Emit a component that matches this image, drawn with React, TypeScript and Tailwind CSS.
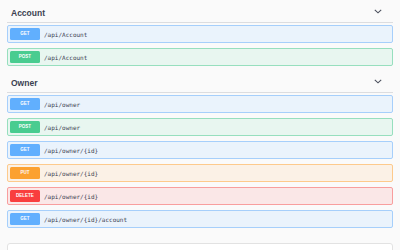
import { type FC } from "react";

type Method = "GET" | "POST" | "PUT" | "DELETE";

interface Op {
  method: Method;
  path: string;
}

const styles: Record<Method, { row: string; badge: string }> = {
  GET: { row: "bg-[#eaf3fc] border-[#a6cffb]", badge: "bg-[#61affe]" },
  POST: { row: "bg-[#e8f6f0] border-[#97dfbe]", badge: "bg-[#49cc90]" },
  PUT: { row: "bg-[#fbf1e6] border-[#fdca8c]", badge: "bg-[#fca130]" },
  DELETE: { row: "bg-[#fae7e7] border-[#f89e9e]", badge: "bg-[#f93e3e]" },
};

const sections: { name: string; ops: Op[] }[] = [
  {
    name: "Account",
    ops: [
      { method: "GET", path: "/api/Account" },
      { method: "POST", path: "/api/Account" },
    ],
  },
  {
    name: "Owner",
    ops: [
      { method: "GET", path: "/api/owner" },
      { method: "POST", path: "/api/owner" },
      { method: "GET", path: "/api/owner/{id}" },
      { method: "PUT", path: "/api/owner/{id}" },
      { method: "DELETE", path: "/api/owner/{id}" },
      { method: "GET", path: "/api/owner/{id}/account" },
    ],
  },
];

const Chevron: FC = () => (
  <svg width="8" height="5" viewBox="0 0 8 5" className="mb-[4px]">
    <path d="M0.8 0.8 L4 3.8 L7.2 0.8" fill="none" stroke="#4a4f5c" strokeWidth="1.1" />
  </svg>
);

const OpRow: FC<{ op: Op }> = ({ op }) => (
  <div className={`h-[18px] flex items-center gap-[4px] border rounded-[2px] px-[2px] ${styles[op.method].row}`}>
    <span
      className={`w-[30px] h-[12px] rounded-[1.5px] flex items-center justify-center text-white text-[4.5px] font-bold ${styles[op.method].badge}`}
    >
      {op.method}
    </span>
    <span className="font-['DejaVu_Sans_Mono',monospace] text-[6px] text-[#3b4151]">{op.path}</span>
  </div>
);

export default function App() {
  return (
    <div className="w-[400px] h-[250px] overflow-hidden bg-[#fafafa] px-[7px] font-['Liberation_Sans',Arial,sans-serif]">
      <div className="flex flex-col gap-[4px]">
        {sections.map((s) => (
          <div key={s.name}>
            <div className="h-[23px] pt-[4px] pl-[4px] pr-[11px] flex items-center justify-between border-b border-[#dcdde0]">
              <span className="text-[8.5px] leading-none font-bold text-[#3b4151]">{s.name}</span>
              <Chevron />
            </div>
            <div className="mt-[2px] flex flex-col gap-[5px]">
              {s.ops.map((op, i) => (
                <OpRow key={i} op={op} />
              ))}
            </div>
          </div>
        ))}
      </div>
      <div className="mt-[15px] h-[30px] bg-white border border-[#e2e2e2] rounded-[3px]" />
    </div>
  );
}
